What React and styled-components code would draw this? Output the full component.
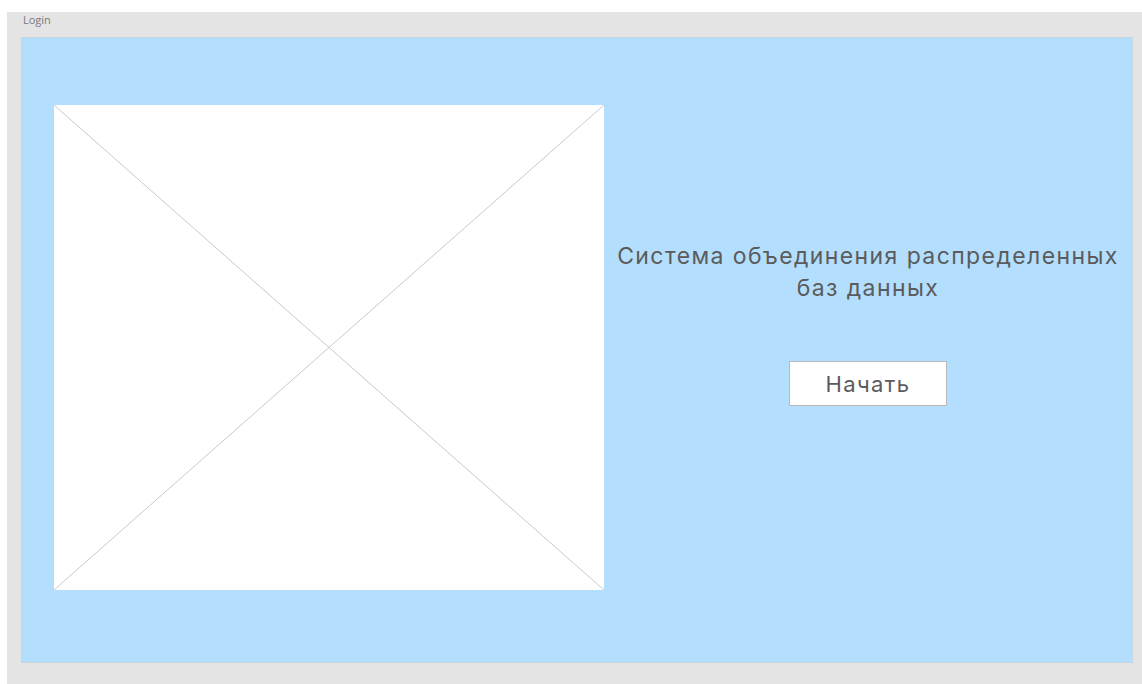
import React from "react";
import styled, { createGlobalStyle } from "styled-components";

const GlobalStyle = createGlobalStyle`
    html, body {
        margin: 0;
        padding: 0;
        background: #ffffff;
    }
    body {
        font-family: Inter, "Liberation Sans", Arial, sans-serif;
    }
`

const Artboard = styled.div`
    margin: 12px 0 0 7px;
    height: 672px;
    background-color: #e4e4e4;
    padding: 0 9px 21px 14px;
    box-sizing: border-box;
    display: flex;
    flex-direction: column;
`

const BoardName = styled.div`
    height: 25px;
    padding: 1px 0 0 2px;
    box-sizing: border-box;
    font-size: 11px;
    line-height: 14px;
    color: #7a7a7a;
    font-family: "Open Sans", "Liberation Sans", sans-serif;
`

const Screen = styled.div`
    flex: 1;
    background-color: #b3defd;
    border: 1px solid #c6d5e0;
    display: flex;
    padding: 67px 0 0 32px;
    box-sizing: border-box;
`

const Placeholder = styled.div`
    width: 550px;
    height: 485px;
    background-color: #ffffff;
    flex-shrink: 0;

    svg {
        display: block;
    }
`

const Intro = styled.div`
    flex: 1;
    display: flex;
    flex-direction: column;
    align-items: center;
    padding-top: 135px;
`

const Heading = styled.h1`
    margin: 0;
    font-weight: normal;
    font-size: 23px;
    line-height: 32px;
    letter-spacing: 1.4px;
    text-align: center;
    color: #5b5b5b;
    font-family: Inter, "Liberation Sans", Arial, sans-serif;
`

const StartButton = styled.button`
    margin-top: 57px;
    width: 158px;
    height: 45px;
    padding: 0;
    background-color: #ffffff;
    border: 1px solid #b9b9b9;
    border-radius: 0;
    font-size: 22px;
    letter-spacing: 1.4px;
    color: #5b5b5b;
    font-family: Inter, "Liberation Sans", Arial, sans-serif;
    cursor: pointer;
`

const ImagePlaceholder = () => (
    <Placeholder>
        <svg width="550" height="485" viewBox="0 0 550 485">
            <line x1="0" y1="0" x2="550" y2="485" stroke="#c9c9c9" strokeWidth="1" />
            <line x1="550" y1="0" x2="0" y2="485" stroke="#c9c9c9" strokeWidth="1" />
        </svg>
    </Placeholder>
)

const App = () => {
    return (
        <>
            <GlobalStyle />
            <Artboard>
                <BoardName>Login</BoardName>
                <Screen>
                    <ImagePlaceholder />
                    <Intro>
                        <Heading>
                            Система объединения распределенных<br />
                            баз данных
                        </Heading>
                        <StartButton>Начать</StartButton>
                    </Intro>
                </Screen>
            </Artboard>
        </>
    );
};

export default App;
